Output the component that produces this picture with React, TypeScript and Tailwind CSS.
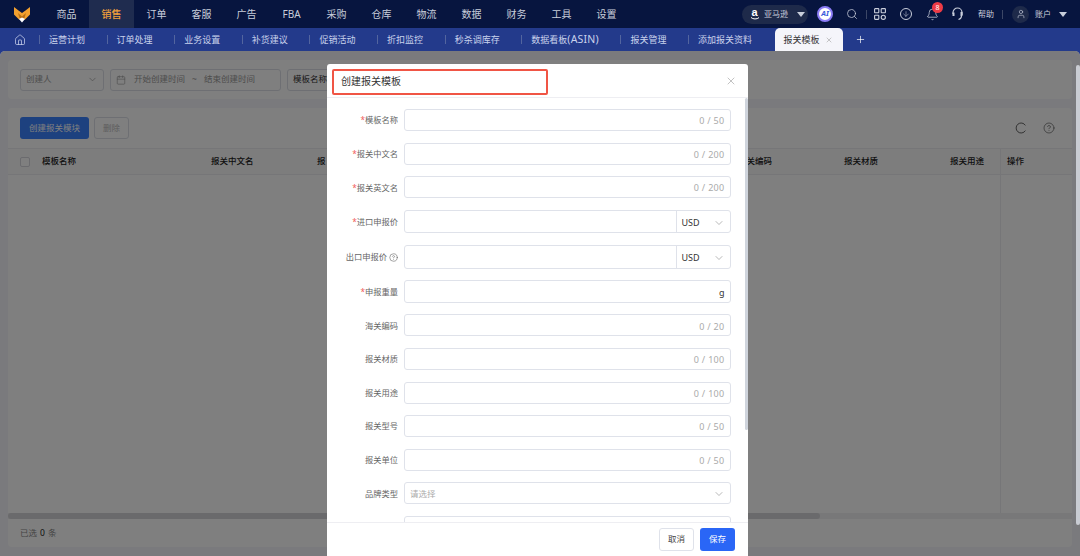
import React from "react";
import { ChevronDown, X, Plus, Home, Search, Calendar, CircleHelp, User, Bell, ArrowDown } from "lucide-react";

const FONT = "font-['Noto_Sans','Noto_Sans_CJK_SC',sans-serif]";
const NAV = ["商品", "销售", "订单", "客服", "广告", "FBA", "采购", "仓库", "物流", "数据", "财务", "工具", "设置"];
const TABS = ["运营计划", "订单处理", "业务设置", "补货建议", "促销活动", "折扣监控", "秒杀调库存"];
const TABS2 = ["报关管理", "添加报关资料"];

function Fox() {
  return (
    <svg width="18" height="17" viewBox="0 0 18 17" className="block">
      <path d="M1 1 L5.5 4.5 L9 7 L12.5 4.5 L17 1 L17 8.5 L12 13.5 L9 13.5 L6 13.5 L1 8.5 Z" fill="#f2a02f" />
      <path d="M5 7 L9 10.5 L13 7 L11.5 12 L9 13 L6.5 12 Z" fill="#b86f14" />
      <path d="M6 13 L9 11.5 L12 13 L9 16.5 Z" fill="#fff" />
    </svg>
  );
}

function Caret() {
  return <span className="block w-0 h-0 border-l-[4px] border-r-[4px] border-t-[5px] border-l-transparent border-r-transparent border-t-[#c8cedb]" />;
}

function AmazonMark() {
  return (
    <span className="w-[11px] flex flex-col items-center shrink-0 font-['Liberation_Sans',sans-serif]">
      <span className="text-[11px] font-bold text-white leading-[9px]">a</span>
      <svg width="10" height="3" viewBox="0 0 10 3" fill="none" className="block">
        <path d="M1 0.5 C3 2.4 7 2.4 9 0.6" stroke="#fff" strokeWidth="1" />
      </svg>
    </span>
  );
}

function HeadsetIcon() {
  return (
    <svg width="13" height="14" viewBox="0 0 13 14" fill="none" stroke="currentColor" strokeWidth="1.2" className="ml-[12px] shrink-0">
      <path d="M2 7 V5.5 A4.5 4.5 0 0 1 11 5.5 V8" />
      <path d="M2.5 5.5 V9" strokeWidth="2" />
      <path d="M10.5 5 V9" strokeWidth="2" />
      <path d="M10.5 9 C10.5 11 9 12 7.5 12.5" />
    </svg>
  );
}

function TopNav() {
  return (
    <div className="h-[28px] bg-[#07153f] flex items-stretch shrink-0">
      <div className="w-[44px] shrink-0 flex items-center pl-[13px]"><Fox /></div>
      {NAV.map((n) => (
        <div
          key={n}
          className={`w-[45px] shrink-0 flex items-center justify-center text-[10px] ${n === "销售" ? "bg-[#1f2c4f] text-[#f0a03c] font-medium" : "text-[#c9cedb]"}`}
        >
          {n}
        </div>
      ))}
      <div className="flex-1 flex items-center text-[#c9cedb]">
        <div className="ml-[113px] w-[66px] h-[19px] rounded-full bg-[#1e2a4a] flex items-center pl-[7px] shrink-0">
          <AmazonMark />
          <span className="text-[8px] ml-[4px] w-[27px] whitespace-nowrap">亚马逊</span>
          <span className="ml-[6px]"><Caret /></span>
        </div>
        <div className="ml-[9px] w-[16px] h-[16px] rounded-full bg-white border-[2px] border-[#8b7cf6] flex items-center justify-center text-[7.5px] font-bold italic text-[#3b5bdb] shrink-0">AI</div>
        <Search size={12} strokeWidth={1.5} className="ml-[13px] shrink-0" />
        <span className="ml-[8px] w-px h-[9px] bg-[#3c4766] shrink-0" />
        <svg width="12" height="12" viewBox="0 0 12 12" fill="none" stroke="currentColor" strokeWidth="1.1" className="ml-[7px] shrink-0">
          <rect x="0.6" y="0.6" width="4.2" height="4.2" rx="0.6" />
          <rect x="7.2" y="0.6" width="4.2" height="4.2" rx="0.6" />
          <rect x="0.6" y="7.2" width="4.2" height="4.2" rx="0.6" />
          <circle cx="9.3" cy="9.3" r="2.1" />
        </svg>
        <span className="ml-[14px] w-[12px] h-[12px] rounded-full border border-[#c9cedb] flex items-center justify-center shrink-0">
          <ArrowDown size={8} strokeWidth={1.6} />
        </span>
        <span className="relative ml-[14px] shrink-0">
          <Bell size={13} strokeWidth={1.4} className="block" />
          <span className="absolute -top-[6px] left-[6px] w-[11px] h-[11px] rounded-full bg-[#ee3b46] text-white text-[7px] leading-[11px] text-center">8</span>
        </span>
        <HeadsetIcon />
        <span className="ml-[14px] text-[8px] shrink-0">帮助</span>
        <span className="ml-[8px] w-px h-[9px] bg-[#3c4766] shrink-0" />
        <span className="ml-[9px] w-[17px] h-[17px] rounded-full bg-[#1e2a4a] flex items-center justify-center shrink-0">
          <User size={10} strokeWidth={1.5} />
        </span>
        <span className="ml-[6px] text-[8px] shrink-0">账户</span>
        <span className="ml-[8px] shrink-0"><Caret /></span>
      </div>
    </div>
  );
}

function Tab({ children }: { children: React.ReactNode }) {
  return (
    <div className="flex items-center shrink-0">
      <span className="w-px h-[9px] bg-[#53659f]" />
      <span className="ml-[9px] mr-[21.6px] whitespace-nowrap">{children}</span>
    </div>
  );
}

function TabBar() {
  return (
    <div className="h-[23px] bg-[#233a8b] flex items-center shrink-0 text-[9px] text-[#c9d2ec]">
      <Home size={12} strokeWidth={1.5} className="ml-[14px] mr-[13px] shrink-0" />
      {TABS.map((t) => <Tab key={t}>{t}</Tab>)}
      <Tab>数据看板<span className="text-[10.5px] tracking-[0.2px]">(ASIN)</span></Tab>
      {TABS2.map((t) => <Tab key={t}>{t}</Tab>)}
      <div className="ml-[1px] w-[68px] h-[23px] bg-[#f5f5fa] rounded-t-[5px] flex items-center pl-[9px] text-[#333] shrink-0">
        <span>报关模板</span>
        <X size={8} className="ml-[5px] text-[#aaa]" />
      </div>
      <Plus size={11} strokeWidth={1.5} className="ml-[12px] text-white shrink-0" />
    </div>
  );
}

function PageBehind() {
  const cols: [string, string][] = [["模板名称", "w-[169px]"], ["报关中文名", "w-[106px]"], ["报", "w-[421px]"], ["海关编码", "w-[106px]"], ["报关材质", "w-[106px]"], ["报关用途", "w-[50px]"]];
  return (
    <div className="flex-1 min-h-0 bg-[#f5f5fa] px-[8px] pt-[9px] pb-[9px] flex flex-col gap-[9px] rounded-t-[5px]">
      <div className="h-[39px] bg-white rounded-[4px] flex items-center pl-[12px] gap-[6px] shrink-0 text-[8.5px] text-[#999]">
        <div className="w-[84px] h-[22px] border border-[#dcdfe6] rounded-[3px] flex items-center justify-between px-[5px]">
          <span>创建人</span><ChevronDown size={11} strokeWidth={1.5} />
        </div>
        <div className="w-[171px] h-[22px] border border-[#dcdfe6] rounded-[3px] flex items-center px-[5px]">
          <Calendar size={10} strokeWidth={1.5} />
          <span className="ml-[8px]">开始创建时间</span>
          <span className="ml-[7px]">~</span>
          <span className="ml-[7px]">结束创建时间</span>
        </div>
        <div className="w-[60px] h-[22px] border border-[#dcdfe6] rounded-[3px] flex items-center px-[5px] text-[#333]">模板名称</div>
      </div>
      <div className="flex-1 min-h-0 bg-white rounded-[4px] flex flex-col">
        <div className="h-[40px] shrink-0 flex items-center pl-[12px] pr-[17px] text-[8.5px]">
          <div className="w-[69px] h-[22px] bg-[#3a82ff] rounded-[3px] text-white flex items-center justify-center">创建报关模块</div>
          <div className="ml-[5px] w-[35px] h-[22px] border border-[#dcdfe6] rounded-[3px] text-[#bbb] flex items-center justify-center">删除</div>
          <svg width="12" height="12" viewBox="0 0 12 12" fill="none" stroke="#555" strokeWidth="0.9" className="ml-auto">
            <path d="M10.4 3.4 A5 5 0 1 0 10.4 8.6" />
          </svg>
          <CircleHelp size={12} strokeWidth={1.2} className="ml-[16px] text-[#444]" />
        </div>
        <div className="h-[27px] shrink-0 flex items-center border-y border-[#ececf0] bg-[#fafafa] pl-[12px] text-[8.5px] font-medium text-[#222]">
          <span className="w-[10px] h-[10px] border border-[#d6d6dc] rounded-[2px] bg-white mr-[12px] shrink-0" />
          {cols.map(([c, w]) => (
            <span key={c} className={`${w} shrink-0 whitespace-nowrap`}>{c}</span>
          ))}
          <span className="self-stretch w-px bg-[#ececf0]" />
          <span className="ml-[6px]">操作</span>
        </div>
        <div className="flex-1 min-h-0 flex justify-end pr-[71px]">
          <span className="w-px bg-[#ececf0]" />
        </div>
        <div className="h-[6px] shrink-0 bg-[#f0f0f2]">
          <div className="h-full w-[812px] bg-[#d4d4d8] rounded-full" />
        </div>
        <div className="h-[28px] shrink-0 flex items-center pl-[12px] text-[8.5px] text-[#888]">
          已选<span className="mx-[3px] text-[#222]">0</span>条
        </div>
      </div>
    </div>
  );
}

type RowDef = { label: string; req?: boolean; count?: string; kind?: "cur" | "g" | "sel"; help?: boolean };
const ROWS: RowDef[] = [
  { label: "模板名称", req: true, count: "0 / 50" },
  { label: "报关中文名", req: true, count: "0 / 200" },
  { label: "报关英文名", req: true, count: "0 / 200" },
  { label: "进口申报价", req: true, kind: "cur" },
  { label: "出口申报价", help: true, kind: "cur" },
  { label: "申报重量", req: true, kind: "g" },
  { label: "海关编码", count: "0 / 20" },
  { label: "报关材质", count: "0 / 100" },
  { label: "报关用途", count: "0 / 100" },
  { label: "报关型号", count: "0 / 50" },
  { label: "报关单位", count: "0 / 50" },
  { label: "品牌类型", kind: "sel" },
  { label: "", count: "" },
];

function Row({ r }: { r: RowDef }) {
  const h = r.kind === "cur" ? "h-[23.6px]" : r.kind === "g" ? "h-[22.6px]" : "h-[22px]";
  return (
    <div className="flex items-center shrink-0">
      <div className="w-[71px] shrink-0 pt-[1px] text-right text-[8.25px] text-[#666] whitespace-nowrap flex items-center justify-end">
        {r.req && <span className="text-[#f25c5c]">*</span>}
        <span>{r.label}</span>
        {r.help && <CircleHelp size={9} strokeWidth={1.4} className="ml-[2px] text-[#555]" />}
      </div>
      <div className={`ml-[6px] w-[326.5px] ${h} border border-[#dfe2ea] rounded-[3px] flex items-center text-[9px] bg-white`}>
        {r.count !== undefined && <span className="ml-auto pr-[5px] pt-[2px] text-[#aaa] tracking-[0.3px]">{r.count}</span>}
        {r.kind === "g" && <span className="ml-auto pr-[5px] pt-[2px] text-[#333]">g</span>}
        {r.kind === "sel" && (
          <div className="flex-1 flex items-center pt-[2px]">
            <span className="pl-[5px] text-[8.5px] text-[#aaa]">请选择</span>
            <ChevronDown size={12} strokeWidth={1.2} className="ml-auto mr-[5px] text-[#888]" />
          </div>
        )}
        {r.kind === "cur" && (
          <div className="ml-auto w-[54px] h-full border-l border-[#dfe2ea] flex items-center pl-[5px] pt-[2px] text-[#333] text-[9px]">
            USD
            <ChevronDown size={12} strokeWidth={1.2} className="ml-auto mr-[5px] text-[#888]" />
          </div>
        )}
      </div>
    </div>
  );
}

function Modal() {
  return (
    <div className="absolute left-[327px] top-[13px] bottom-0 w-[421px] bg-white rounded-t-[3px] flex flex-col">
      <div className="h-[33.5px] shrink-0 pt-[2px] border-b border-[#eeeef2] flex items-center pl-[14px] pr-[11px] text-[10px] text-[#333]">
        <span>创建报关模板</span>
        <X size={12} strokeWidth={1.2} className="ml-auto text-[#999]" />
        <span className="absolute left-[5px] top-[5px] w-[216px] h-[26px] border-2 border-[#f05545] rounded-[2px]" />
      </div>
      <div className="relative flex-1 min-h-0 overflow-hidden pt-[11.5px] flex flex-col gap-[11.6px]">
        {ROWS.map((r, i) => <Row key={i} r={r} />)}
        <span className="absolute right-0 top-0 w-[3.5px] h-[332px] bg-[#cfd4dc] rounded-full" />
      </div>
      <div className="h-[34px] shrink-0 border-t border-[#eeeef2] flex items-center justify-end pr-[13px] gap-[6px] text-[8.5px]">
        <div className="w-[35px] h-[22.5px] border border-[#dfe2ea] rounded-[3px] flex items-center justify-center text-[#444]">取消</div>
        <div className="w-[35px] h-[22.5px] bg-[#2a66f6] rounded-[3px] flex items-center justify-center text-white">保存</div>
      </div>
    </div>
  );
}

export default function App() {
  return (
    <div className={`${FONT} w-[1080px] h-[556px] overflow-hidden flex flex-col bg-[#233a8b]`}>
      <TopNav />
      <TabBar />
      <div className="relative flex-1 min-h-0 flex flex-col">
        <PageBehind />
        <div className="absolute inset-0 bg-black/50 rounded-t-[5px]" />
        <span className="absolute right-0 top-[14px] w-[4px] h-[460px] bg-[#c9ccd3] rounded-full" />
        <Modal />
      </div>
    </div>
  );
}
